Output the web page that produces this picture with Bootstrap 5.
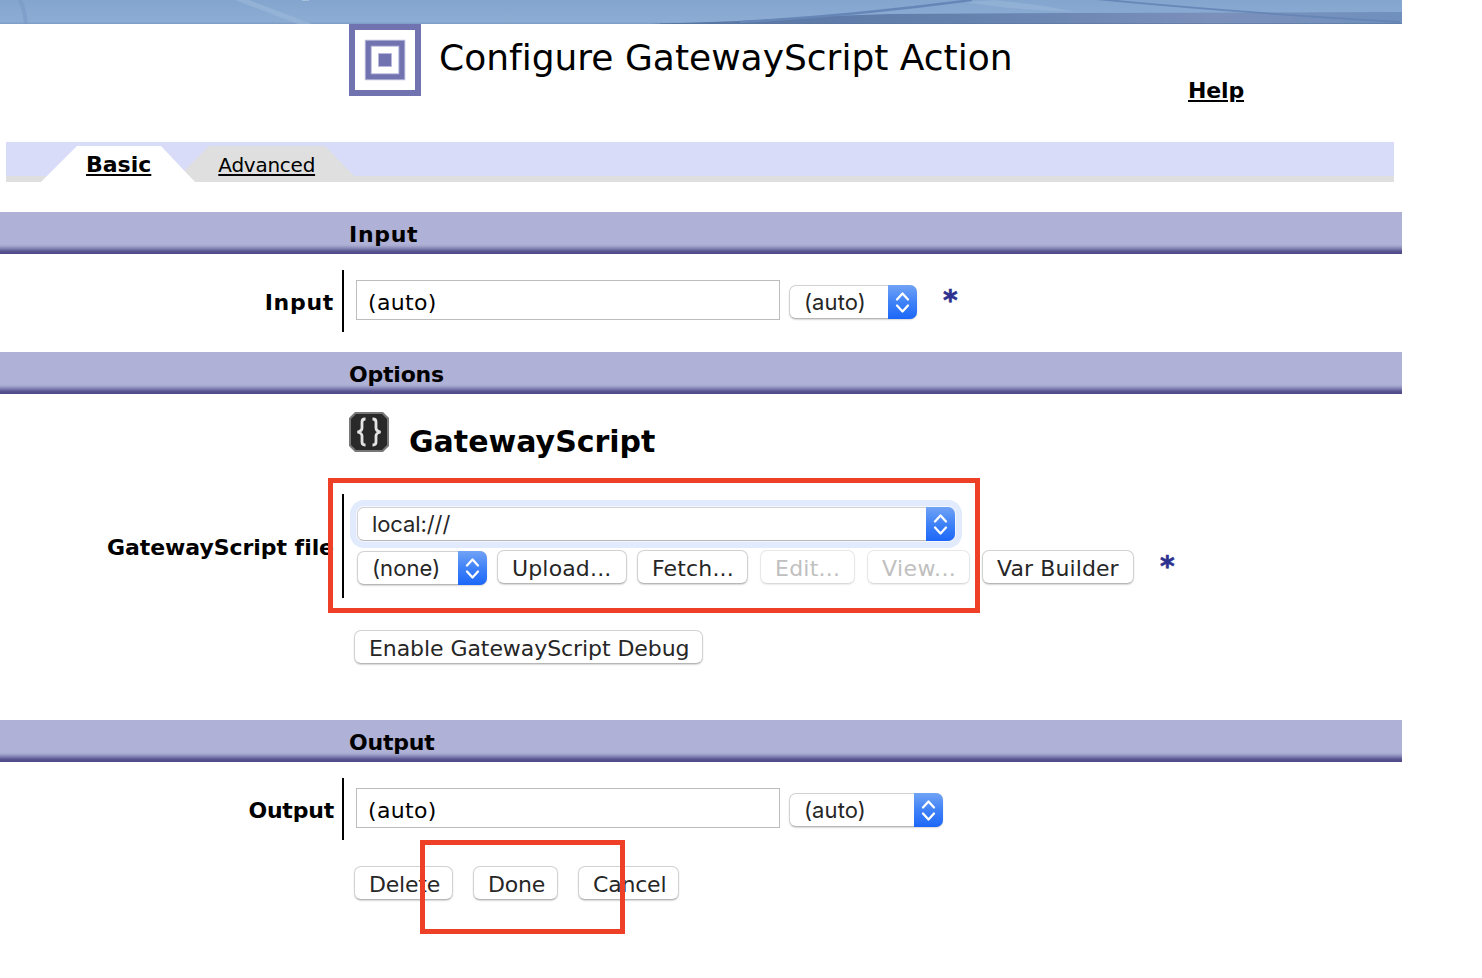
<!DOCTYPE html>
<html lang="en">
<head>
<meta charset="utf-8">
<title>Configure GatewayScript Action</title>
<link href="https://cdn.jsdelivr.net/npm/bootstrap@5.3.0/dist/css/bootstrap.min.css" rel="stylesheet">
<style>
body{font-family:"DejaVu Sans",Verdana,sans-serif;font-size:22px;line-height:26px;color:#000;background:#fff;overflow:hidden;font-variant-ligatures:none}
.page{width:1402px;height:978px}
.banner{height:24px}
.masthead{height:118px;padding-left:349px}
.masthead h1{font-size:36px;line-height:44px;font-weight:400;margin:12px 0 0 18px;width:749px;white-space:nowrap}
.help{margin-top:54px;color:#000;letter-spacing:-.15px}
a{text-underline-offset:2px;text-decoration-thickness:1.5px}
.tabbar{height:40px;margin:0 8px 30px 6px;background:linear-gradient(#d8dcf8 34.5px,#dfdfdf 34.5px)}
.tabbar svg{left:0;top:0}
.tabbar a{color:#000;line-height:26px;margin-top:10px}
.tabbar .first-tab{margin-left:80px}
.tabbar .second-tab{margin-left:67px;font-size:20px;letter-spacing:-.25px}
.bar{height:42px;margin:0;padding:10px 0 0 349px;font-size:22px;font-weight:700;line-height:26px;background:linear-gradient(#afb1d6 0 32px,#a5a7ce 34px,#7c7bae 37px,#5b5792 39px,#4d4886 42px)}
.wide{letter-spacing:.7px}
.snug{letter-spacing:-.2px}
.in-section{height:140px}
.opt-section{height:368px}
.field{padding-top:16px}
.field .tag{width:334px;text-align:right;margin-right:8px;padding-top:20px;font-weight:700;line-height:26px}
.field .tag.tall{padding-top:41px;letter-spacing:-.05px}
.field .body{border-left:2px solid #000;padding-left:12px;height:62px}
.field .body.tall{height:104px}
.entry{width:424px;height:40px;margin-top:10px;border:1px solid #bdbdbd;border-radius:0;padding:4px 11px 0;font-size:22px;letter-spacing:.35px;color:#000;line-height:32px}
.mac{height:34px;border:1px solid #d2d2d2;border-bottom-color:#b7b7b7;border-radius:7px;background:#fff;box-shadow:0 1px 1.5px rgba(0,0,0,.16);padding:2px 0 0 14px;font-size:22px;line-height:31px;color:#262626;text-align:left;white-space:nowrap}
.mac.off{color:#c0c0c0;border-color:#e7e7e7;border-bottom-color:#dadada;opacity:1;box-shadow:0 1px 1.5px rgba(0,0,0,.08)}
.pick{display:flex;justify-content:space-between;font-family:Inter,sans-serif;padding:0 0 0 14px;line-height:32px;margin:15px 0 0 9px;letter-spacing:.1px}
.cap{width:29px;height:34px;margin:-1px;border-radius:0 7px 7px 0;background:linear-gradient(#71a3f5,#3f82f7 50%,#1c67f8);flex:none}
.pick.focus{width:598px;margin:13px 0 9px 1px;box-shadow:0 0 0 1px #f3f6fe,0 0 0 7px #e2ebfe;padding-left:14px;letter-spacing:-.1px}
.pick.none{width:130px;margin:1px 10px 0 1px}
.star{color:#2c318f;font-weight:700;font-size:28px;line-height:30px;margin:16px 0 0 26px;-webkit-text-stroke:.6px #2c318f}
.star.low{margin-top:2px}
.gs-title{font-size:30px;font-weight:700;line-height:36px;margin:12px 0 0 20px}
.gs-head{height:84px;padding:18px 0 0 349px}
.callout{border:5px solid #ee4026;pointer-events:none}
</style>
</head>
<body>
<svg width="0" height="0" class="position-absolute"><symbol id="arrows" viewBox="0 0 29 34"><path d="M9 14.5l5.5-6 5.5 6M9 20.5l5.5 6 5.5-6" fill="none" stroke="#fff" stroke-width="2.3" stroke-linecap="round" stroke-linejoin="round"/></symbol></svg>
<div class="page position-relative">
<svg class="banner d-block" width="1402" height="24" viewBox="0 0 1402 24">
<defs><linearGradient id="sky" x2="0" y2="1"><stop offset="0" stop-color="#83a5ce"/><stop offset=".9" stop-color="#8dacd4"/><stop offset="1" stop-color="#7c9cc5"/></linearGradient>
<linearGradient id="hill"><stop offset="0" stop-color="#5774a2"/><stop offset=".4" stop-color="#6481ae"/><stop offset=".75" stop-color="#7b90bb"/><stop offset="1" stop-color="#7090bd"/></linearGradient></defs>
<path fill="url(#sky)" d="M0 0h1402v24H0z"/>
<path d="M20 0q5 12 6 24" fill="none" stroke="#7697c4" stroke-width="4" opacity=".5"/>
<path d="M235 0h14L312 24h-14z" fill="#98b7d7" opacity=".7"/>
<path d="M650 24l90-3 90-5 60-2 180-1 332-1v12z" fill="url(#hill)"/>
<path d="M740 22Q850 16 972 0" fill="none" stroke="#6686b7" stroke-width="2.5"/>
<path d="M965 2q45 8 110 10l-30-6q-30-4-50-6z" fill="#9cbada" opacity=".5"/>
<path d="M1096-1Q1230 12 1400 22" fill="none" stroke="#6484b5" stroke-width="1.8" opacity=".9"/>
<path d="M660 23.5h742" stroke="#58769f" opacity=".6"/><path d="M302 0h7" stroke="#c5dae6"/>
</svg>
<header class="masthead d-flex align-items-start">
<svg width="72" height="72" viewBox="0 0 72 72"><path fill="#fff" stroke="#7173b0" stroke-width="6" d="M3 3h66v66H3z"/><path fill="none" stroke="#b9badb" stroke-width="7" d="M19.3 19.3h33.5v33.5H19.3z"/><path fill="none" stroke="#7173b0" stroke-width="5" d="M19.3 19.3h33.5v33.5H19.3z"/><path fill="#7173b0" stroke="#b9badb" d="M29.5 29.5h13v13h-13z"/></svg>
<h1>Configure GatewayScript Action</h1>
<a href="#" class="help fw-bold">Help</a>
</header>
<nav class="tabbar d-flex align-items-start position-relative">
<svg class="position-absolute" width="400" height="40" viewBox="0 0 400 40"><path fill="#dfdfdf" d="M178 29L203 4h116l30 31v5H189z"/><path fill="#fff" d="M35 40L71 4h84l34 36z"/></svg>
<a href="#" class="first-tab position-relative fw-bold">Basic</a>
<a href="#" class="second-tab position-relative">Advanced</a>
</nav>
<section class="in-section">
<h2 class="bar wide">Input</h2>
<div class="field d-flex"><label class="tag wide">Input</label>
<div class="body d-flex"><input class="entry form-control" value="(auto)">
<button class="mac pick btn" style="width:128px"><span>(auto)</span><svg class="cap"><use href="#arrows"/></svg></button>
<span class="star">*</span></div></div>
</section>
<section class="opt-section">
<h2 class="bar snug">Options</h2>
<div class="gs-head d-flex">
<svg width="40" height="40" viewBox="0 0 40 40"><path fill="#777" d="M6 0h28l6 6v28l-6 6H6l-6-6V6z"/><path fill="#292929" d="M7 2h26l5 5v26l-5 5H7l-5-5V7z"/><path fill="none" stroke="#e4e4e4" stroke-width="2.8" d="M16.5 7h-.5q-3 0-3 3v6q0 3-4.500 4 4.500 1 4.500 4v6q0 3 3 3h.5M23.500 7h.5q3 0 3 3v6q0 3 4.500 4-4.500 1-4.500 4v6q0 3-3 3h-.5"/></svg>
<h3 class="gs-title">GatewayScript</h3></div>
<div class="field d-flex"><label class="tag tall">GatewayScript file</label>
<div class="body tall">
<button class="mac pick focus btn"><span>local:///</span><svg class="cap"><use href="#arrows"/></svg></button>
<div class="d-flex"><button class="mac pick none btn"><span>(none)</span><svg class="cap"><use href="#arrows"/></svg></button>
<button class="btn mac" style="width:130px;margin-right:10px;letter-spacing:.15px">Upload...</button><button class="btn mac" style="width:111px;margin-right:12px;letter-spacing:.15px">Fetch...</button><button class="btn mac off" disabled style="width:95px;margin-right:12px;letter-spacing:.25px">Edit...</button><button class="btn mac off" disabled style="width:103px;margin-right:12px;letter-spacing:.45px">View...</button><button class="btn mac" style="width:152px;letter-spacing:.1px">Var Builder</button>
<span class="star low">*</span></div></div></div>
<button class="btn mac d-block" style="width:349px;margin:32px 0 0 354px;letter-spacing:-.07px">Enable GatewayScript Debug</button>
</section>
<section>
<h2 class="bar snug">Output</h2>
<div class="field d-flex"><label class="tag snug">Output</label>
<div class="body d-flex"><input class="entry form-control" value="(auto)">
<button class="mac pick btn" style="width:154px"><span>(auto)</span><svg class="cap"><use href="#arrows"/></svg></button></div></div>
<div class="d-flex" style="padding:26px 0 0 354px"><button class="btn mac snug" style="width:99px;margin-right:20px">Delete</button><button class="btn mac snug" style="width:85px;margin-right:20px">Done</button><button class="btn mac snug" style="width:101px">Cancel</button></div>
</section>
<div class="callout position-absolute" style="left:328px;top:478px;width:652px;height:135px"></div>
<div class="callout position-absolute" style="left:420px;top:840px;width:205px;height:94px"></div>
</div>
<script src="https://cdn.jsdelivr.net/npm/bootstrap@5.3.0/dist/js/bootstrap.bundle.min.js"></script>
</body>
</html>
